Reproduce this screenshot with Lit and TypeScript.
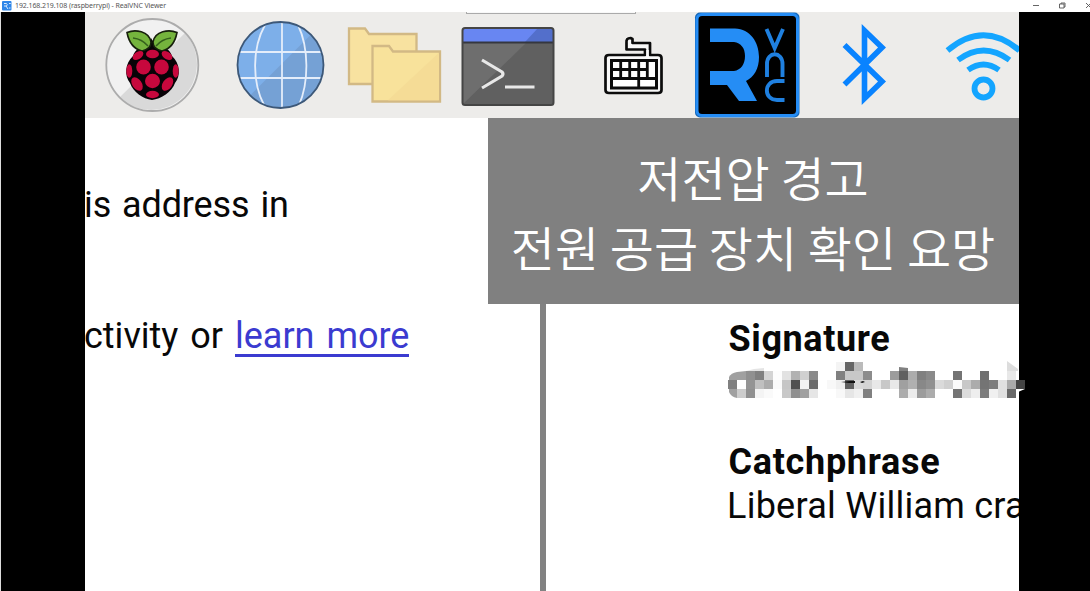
import { LitElement, html, svg, css } from "lit";
import { customElement } from "lit/decorators.js";

/* Redacted signature: rows of 9px blocks, [column, grey level] */
const MOSAIC: [number, string][][] = [
  [[12, "f4"], [13, "66"], [14, "bb"]],
  [[2, "90"], [3, "80"], [4, "d4"], [5, "fd"], [6, "e2"], [7, "b2"], [8, "d0"], [9, "8a"],
   [12, "80"], [13, "c8"], [14, "c8"], [15, "8c"], [18, "9c"], [19, "60"], [20, "ac"], [21, "80"], [22, "8a"],
   [25, "74"], [28, "70"], [31, "e8"]],
  [[0, "80"], [1, "ff"], [2, "94"], [3, "c0"], [4, "ac"], [5, "fa"], [6, "c6"], [7, "50"], [8, "f2"], [9, "6c"],
   [11, "f8"], [12, "f0"], [13, "60"], [14, "d8"], [15, "d4"], [16, "e8"], [17, "c8"], [18, "e8"], [19, "a0"],
   [20, "b0"], [21, "88"], [22, "90"], [23, "da"], [24, "d0"], [25, "fa"], [26, "c8"], [27, "ac"], [28, "74"],
   [29, "7c"], [30, "e0"], [31, "aa"], [32, "44"]],
  [[1, "cc"], [2, "90"], [3, "f4"], [4, "fa"], [6, "c8"], [7, "90"], [8, "a0"], [9, "e6"], [12, "f8"],
   [13, "e6"], [14, "f0"], [15, "80"], [19, "ac"], [20, "ec"], [21, "9c"], [22, "ac"], [25, "74"], [26, "dc"],
   [27, "ee"], [28, "7c"], [29, "f0"], [30, "e0"], [31, "68"]],
];

const berry = (cx: number, cy: number, rx: number, ry: number, a = 0) =>
  svg`<ellipse cx=${cx} cy=${cy} rx=${rx} ry=${ry} transform="rotate(${a} ${cx} ${cy})"/>`;

@customElement("app-root")
export class AppRoot extends LitElement {
  static styles = css`
    :host { display: flex; flex-direction: column; width: 1090px; height: 591px; overflow: hidden; background: #fff; }
    .titlebar { height: 12px; flex: none; display: flex; align-items: center; padding-left: 2px; box-sizing: border-box;
      font: 7px/12px "Noto Sans", sans-serif; color: #555; }
    .titlebar svg { display: block; flex: none; }
    .title { margin-left: 3px; white-space: nowrap; letter-spacing: -0.1px; flex: 1; }
    .stage { flex: 1; min-height: 0; display: flex; background: #000; border-left: 1px solid #ddd; position: relative; }
    .left-bar { width: 84px; flex: none; }
    .screen { width: 933.5px; flex: none; display: flex; flex-direction: column; background: #fff; overflow: hidden; position: relative; }
    .panel { height: 106px; flex: none; display: flex; background: #edecea; overflow: hidden; }
    .panel svg { display: block; flex: none; height: 106px; }
    .tab { position: absolute; left: 381px; top: 0; width: 170px; height: 2px; background: #f8f8f8; border: 1px solid #aaa; border-top: 0; box-sizing: border-box; }
    .content { flex: 1; display: flex; min-height: 0; font: 36px/44px Roboto, sans-serif; color: #080808; white-space: nowrap; }
    .pane-left { width: 455px; flex: none; box-sizing: border-box; padding-top: 65px; overflow: hidden; }
    .line { height: 44px; }
    .l1 { margin-left: -1px; letter-spacing: -.1px; word-spacing: 2px; }
    .l2 { margin-top: 87px; margin-left: -1px; letter-spacing: 0; word-spacing: 3px; }
    .link { color: #3b3bd0; border-bottom: 3px solid #3b3bd0; display: inline-block; line-height: 35px; }
    .divider { width: 5.5px; background: #828282; flex: none; }
    .pane-right { flex: 1; min-width: 0; padding: 199px 0 0 183px; overflow: hidden; }
    .head { font-weight: 700; height: 44px; }
    .sig { letter-spacing: .6px; }
    .catch { margin-top: 79px; letter-spacing: .7px; }
    .phrase { letter-spacing: .25px; margin-left: -1.5px; height: 44px; }
    .notice { position: absolute; left: 402.5px; top: 105.5px; width: 531px; height: 186.5px; box-sizing: border-box; background: #808080;
      padding-top: 23px; color: #fff; font: 48px/70px "Noto Sans CJK KR", sans-serif; font-weight: 350; text-align: center; white-space: nowrap; }
    .mosaic { position: absolute; left: 727px; top: 337px; }
  `;

  private icons() {
    return html`
      <svg width="132" viewBox="85 12 132 106">
        <circle cx="152.3" cy="65" r="46" fill="#f1f1f1"/>
        <path d="M185 33A46 46 0 0 1 119.5 97.5Z" fill="#d9d9d9"/>
        <circle cx="152.3" cy="65" r="46" fill="none" stroke="#acacac" stroke-width="1.8"/>
        <path d="M152 47C160 45 169 47 172 56C180 63 181 76 175 83C172 92 161 99 152 100C143 99 133 92 130 83C124 76 125 63 133 56C136 47 145 45 152 47Z" fill="#080307"/>
        <path d="M151 38C153 42 158 46 158 52H146C146 46 149 43 151 38Z" fill="#080307"/>
        <path d="M127 32.5C135 29 149 31 151 42C151 47 147 50 142 51C134 49 129 43 127 32.5ZM177 32.5C169 29 155 31 153 42C153 47 157 50 162 51C170 49 175 43 177 32.5Z" fill="#75b43d" stroke="#17200c" stroke-width="1.6"/>
        <path d="M133 38Q142 39 148 46M171 38Q162 39 156 46" stroke="#35611d" stroke-width="1.5" fill="none"/>
        <g fill="#c7083d">
          ${berry(152.5, 54, 6.5, 4.3)}${berry(138, 55.5, 6, 3.7, -35)}${berry(167, 55.5, 6, 3.7, 35)}
          ${berry(143.5, 67, 7.3, 7.5)}${berry(161.5, 67, 7.3, 7.5)}
          ${berry(129.3, 71, 3, 6.7)}${berry(175.7, 71, 3, 6.7)}
          ${berry(152.5, 81, 7.5, 7.2)}${berry(137, 84, 4.7, 7.5, -35)}${berry(167.5, 84, 4.7, 7.5, 35)}
          ${berry(152.5, 94.5, 6.5, 3.7)}
        </g>
      </svg>
      <svg width="118" viewBox="217 12 118 106">
        <circle cx="280.5" cy="65" r="43" fill="#7dafe9"/>
        <path d="M311 34.5A43 43 0 0 1 250 95.5Z" fill="#75a1d5"/>
        <g fill="none" stroke="#e4edfa" stroke-width="1.8">
          <path d="M282 22V108M239 52H323M239 78H323M265 25C252 48 252 82 264 105M298 25C309 48 309 82 299 105"/>
        </g>
        <circle cx="280.5" cy="65" r="43" fill="none" stroke="#3d5878" stroke-width="1.8"/>
      </svg>
      <svg width="115" viewBox="335 12 115 106">
        <g stroke="#d2b985" stroke-width="2.3">
          <path d="M349 84V28.5H365L369 34H416.5V84Z" fill="#f8e2a0"/>
          <path d="M372.5 101.5V46H389L393 51.5H440V101.5Z" fill="#f8e29b"/>
        </g>
        <path d="M439 52.7V100.3H388Z" fill="#f5dc96"/>
      </svg>
      <svg width="130" viewBox="450 12 130 106">
        <rect x="462.5" y="28" width="91" height="77" rx="2.5" fill="#606060"/>
        <path d="M463 104V43H526Z" fill="#6e6e6e"/>
        <path d="M463 42V28H553V42Z" fill="#6886f2"/>
        <path d="M538 28H553V42H525Z" fill="#536fcb"/>
        <path d="M463 42.5H553" stroke="#35373f" stroke-width="2.2"/>
        <rect x="462.5" y="28" width="91" height="77" rx="2.5" fill="none" stroke="#454545" stroke-width="2"/>
        <path d="M482 60L502 72Q504 74 502 76L482 88M505 87H534.5" fill="none" stroke="#e8e8e8" stroke-width="3.2"/>
      </svg>
      <svg width="105" viewBox="580 12 105 106">
        <path d="M630.5 38Q626 38 626.5 42.5V49.5H645V55H609Q605.5 55 605.5 58V90Q605.5 93 609 93H658Q661.500 93 661.500 90V58Q661.500 55 658 55H650V43H632.500V39Z" fill="#f8f8f8" stroke="#0c0c0c" stroke-width="2.700" stroke-linejoin="round"/>
        <path d="M647.500 50V57" stroke="#f8f8f8" stroke-width="2.500"/>
        <rect x="611.500" y="60.500" width="45" height="27.500" fill="#fff" stroke="#0c0c0c" stroke-width="3"/>
        <path d="M611 69.500H647M611 78.500H656M620.700 60V78M629.700 60V78M638.700 60V88M647.300 60V78" stroke="#0c0c0c" stroke-width="2.800"/>
      </svg>
      <svg width="135" viewBox="685 12 135 106">
        <rect x="695" y="12.500" width="104.500" height="105" rx="5" fill="#1768b8"/>
        <rect x="697" y="14.500" width="100.500" height="101" rx="5" fill="#000" stroke="#258cf4" stroke-width="3"/>
        <path d="M710 28.500H735C750 29 759 42 759 57C759 69 754 77 746 81L757 101H739L727 85H710V71H734C741 70 745 64 745 56C745 48 741 43 734 42H710Z" fill="#258df5"/>
        <g fill="none" stroke="#1f80e0" stroke-width="3.900">
          <path d="M766.500 29L774.700 48L783 29"/><path d="M767 77V64C767 51 782.500 51 782.500 64V77"/>
          <path d="M784.500 81H777C763.500 81 763.500 100 777 100H784.500"/>
        </g>
      </svg>
      <svg width="100" viewBox="820 12 100 106">
        <path d="M844.500 45L882 81.500L864.500 98.500V30.500L882 47.500L844.500 84.500" fill="none" stroke="#0983ff" stroke-width="5.600"/>
      </svg>
      <svg width="99" viewBox="920 12 99 106">
        <g fill="none" stroke="#14a5ff" stroke-width="5.800">
          <path d="M947.500 50.500Q983.500 20 1019.500 50.500M958 60Q983.500 41 1009.500 60M968 70Q983.500 59 999 70"/>
          <circle cx="983.500" cy="88.500" r="9"/>
        </g>
      </svg>`;
  }

  private mosaic() {
    return svg`
      <g shape-rendering="crispEdges">
        ${MOSAIC.map((row, y) => row.map(([x, g]) =>
          svg`<rect x=${x * 9} y=${11 + y * 9} width="9" height="9" fill="#${g}${g}${g}"/>`))}
      </g>
      <path d="M18 20V29H1V26Q3 22 9 21Z" fill="#a0a0a0"/>
      <path d="M1 38H9V47Q3 46 1 41Z" fill="#a0a0a0"/>
      <path d="M18 20L26 18L36 17V20Z" fill="#e4e4e4"/>
      <path d="M171 20V16L180 17V20Z" fill="#808080"/>
      <path d="M279 10L290 18V20H279Z" fill="#ddd"/>
      <path d="M288 38H297L290 41H288Z" fill="#fff"/>
      <path d="M113 31L122 30H127V32H121ZM132 31L135 30L137 31L134 32Z" fill="#111"/>`;
  }

  render() {
    return html`
      <div class="titlebar">
        <svg width="10" height="10" viewBox="0 0 10 10"><rect width="9.500" height="9.500" rx="1" fill="#2f86e8"/>
          <path d="M2 2.500H4.500Q6 3.500 4.500 5H2M4 5L6 8M7 2L8 3L8.500 2M7 7H8.500" stroke="#d7eaff" fill="none" stroke-width="1"/></svg>
        <span class="title">192.168.219.108 (raspberrypi) - RealVNC Viewer</span>
        <svg width="62" height="12" viewBox="1028 0 62 12" fill="none" stroke="#555" stroke-width=".9">
          <path d="M1033 5.500H1039M1059.500 4H1064V8H1059.500ZM1061 4V3H1065V7H1064M1086 3L1091 8M1091 3L1086 8"/></svg>
      </div>
      <div class="stage">
        <div class="left-bar"></div>
        <div class="screen">
          <div class="panel">${this.icons()}</div>
          <div class="tab"></div>
          <div class="content">
            <div class="pane-left">
              <div class="line l1">is address in</div>
              <div class="line l2">ctivity or <span class="link">learn more</span></div>
            </div>
            <div class="divider"></div>
            <div class="pane-right">
              <div class="head sig">Signature</div>
              <div class="head catch">Catchphrase</div>
              <div class="phrase">Liberal William cra</div>
            </div>
          </div>
          <div class="notice">저전압 경고<br>전원 공급 장치 확인 요망</div>
        </div>
        <svg class="mosaic" width="300" height="50" viewBox="0 -2 300 50">${this.mosaic()}</svg>
      </div>`;
  }
}
